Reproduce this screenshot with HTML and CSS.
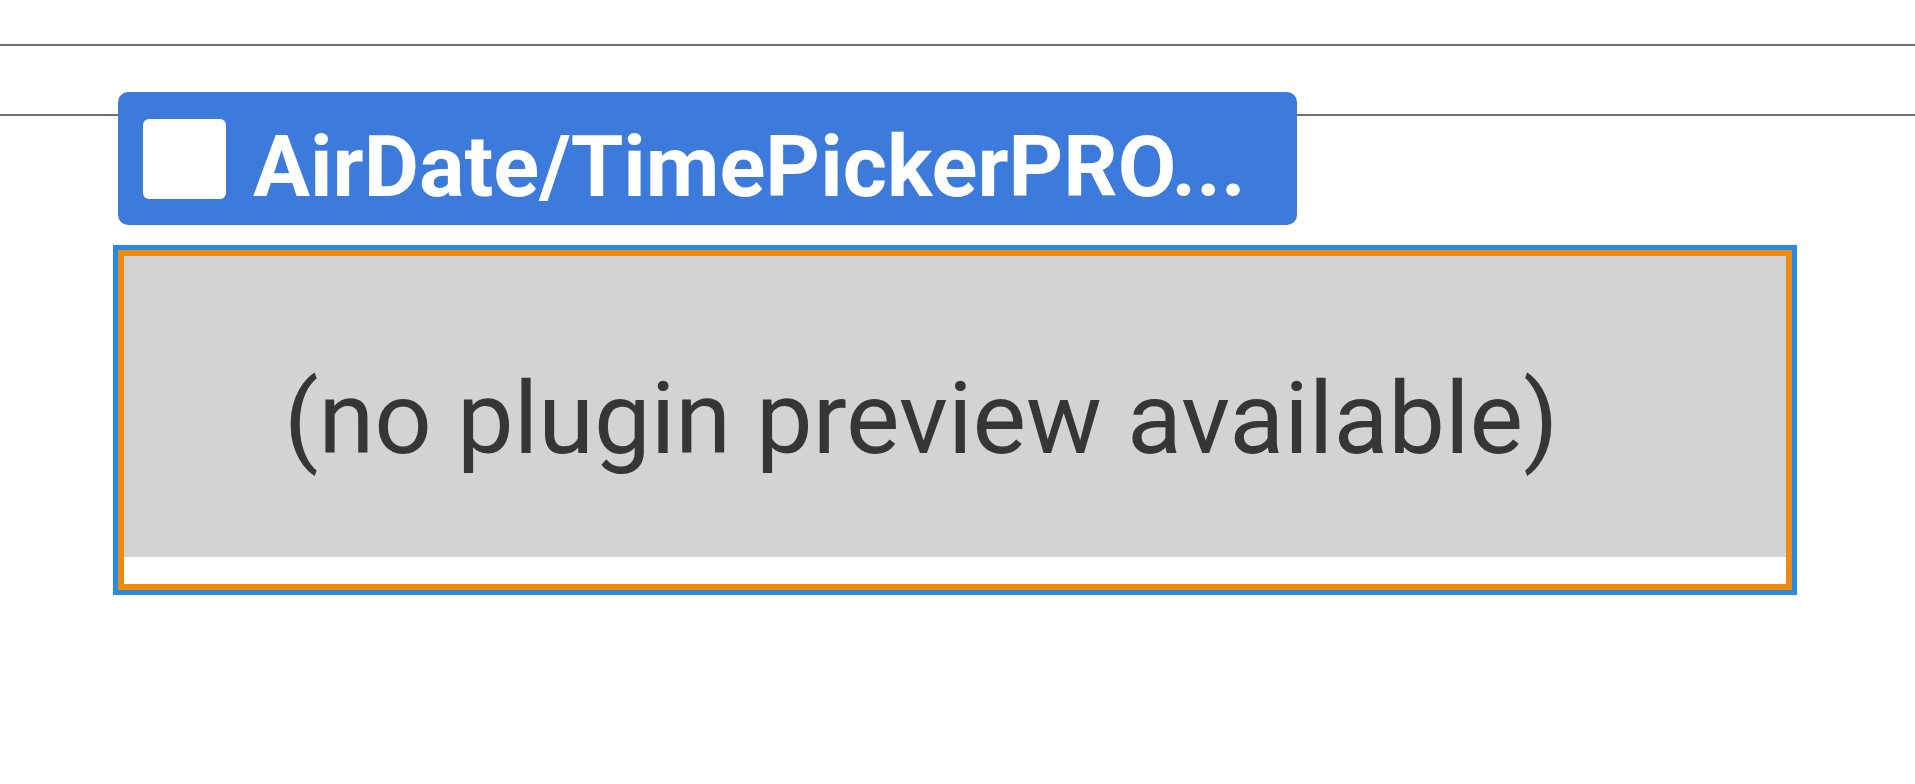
FILE: index.html
```html
<!DOCTYPE html>
<html lang="en">
<head>
<meta charset="utf-8">
<title>Plugin preview</title>
<link rel="stylesheet" href="styles.css">
</head>
<body>
  <div class="top-rule"></div>
  <div class="header-row">
    <div class="plugin-label">
      <span class="checkbox"></span>
      <span class="plugin-name">AirDate/TimePickerPRO...</span>
    </div>
  </div>
  <div class="preview">
    <div class="preview-frame">
      <div class="preview-body">
        <span class="preview-text">(no plugin preview available)</span>
      </div>
      <div class="preview-footer"></div>
    </div>
  </div>
</body>
</html>
```

FILE: styles.css
```css
html, body {
  margin: 0;
  padding: 0;
  background: #ffffff;
}

body {
  font-family: Roboto, "Noto Sans", sans-serif;
  width: 1915px;
  height: 784px;
  overflow: hidden;
}

.top-rule {
  margin-top: 44px;
  height: 2px;
  background: #6f6f6f;
  box-shadow: 0 0 1px #9a9a9a;
}

.header-row {
  margin-top: 46px;
  height: 133px;
  padding-left: 118px;
  background: linear-gradient(to bottom,
    transparent 0, transparent 22px,
    #6f6f6f 22px, #6f6f6f 24px,
    transparent 24px, transparent 100%);
}

.plugin-label {
  width: 1179px;
  height: 133px;
  box-sizing: border-box;
  background: #3c7bdc;
  border-radius: 10px;
  display: flex;
  align-items: center;
  padding-left: 25px;
  gap: 27px;
}

.checkbox {
  flex: none;
  width: 83px;
  height: 80px;
  background: #ffffff;
  border-radius: 6px;
}

.plugin-name {
  color: #ffffff;
  font-weight: 700;
  font-size: 85px;
  line-height: 1;
  padding-top: 18px;
  white-space: nowrap;
}

.preview {
  margin-top: 20px;
  margin-left: 113px;
  width: 1684px;
  height: 350px;
  box-sizing: border-box;
  border: 5px solid #2a8be6;
}

.preview-frame {
  height: 100%;
  box-sizing: border-box;
  border: 6px solid #f08a0c;
  display: flex;
  flex-direction: column;
}

.preview-body {
  flex: 1;
  background: #d3d3d3;
  display: flex;
  align-items: center;
  padding-left: 160px;
}

.preview-text {
  color: #363636;
  font-size: 101px;
  line-height: 1;
  padding-top: 24px;
  white-space: nowrap;
}

.preview-footer {
  height: 27px;
  background: #ffffff;
}
```
